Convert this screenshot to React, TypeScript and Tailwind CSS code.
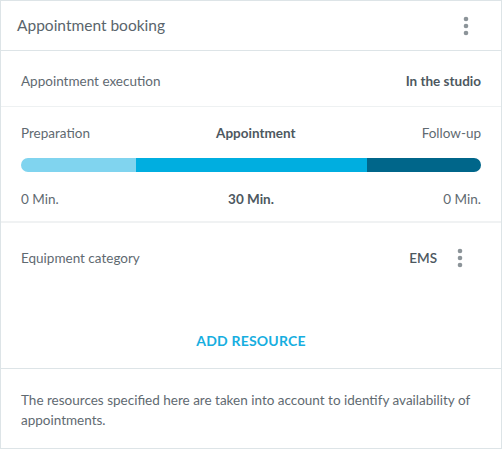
import React from "react";

const DotsIcon = () => (
  <svg width="6" height="20" viewBox="0 0 6 20" className="text-[#8c9499]">
    <circle cx="3" cy="3" r="2.3" fill="currentColor" />
    <circle cx="3" cy="10" r="2.3" fill="currentColor" />
    <circle cx="3" cy="17" r="2.3" fill="currentColor" />
  </svg>
);

const App = () => {
  return (
    <div className="w-[502px] h-[449px] border border-[#dde4e7] bg-white text-[#5f6a71] font-['Lato','Liberation_Sans',sans-serif] flex flex-col">
      <div className="h-[50px] shrink-0 border-b border-[#dde4e7] flex items-center justify-between pl-4 pr-[32px]">
        <h1 className="text-[15.5px] text-[#5a656c]">Appointment booking</h1>
        <DotsIcon />
      </div>

      <div className="h-[56px] shrink-0 border-b border-[#eef1f2] flex items-center justify-between px-5 pt-[5px] text-[13.5px]">
        <span>Appointment execution</span>
        <span className="font-bold text-[#4d585f]">In the studio</span>
      </div>

      <div className="h-[116px] shrink-0 border-b-2 border-[#f0f2f3] px-5 pt-[16px] text-[13.5px]">
        <div className="flex justify-between">
          <span>Preparation</span>
          <span className="font-bold text-[#4d585f]">Appointment</span>
          <span>Follow-up</span>
        </div>
        <div className="mt-[15px] h-[14px] rounded-full overflow-hidden flex">
          <div className="w-[115px] bg-[#80d4ef]" />
          <div className="w-[231px] bg-[#00aee0]" />
          <div className="flex-1 bg-[#00668a]" />
        </div>
        <div className="mt-[17px] flex justify-between">
          <span>0 Min.</span>
          <span className="font-bold text-[#4d585f]">30 Min.</span>
          <span>0 Min.</span>
        </div>
      </div>

      <div className="h-[146px] shrink-0 border-b border-[#dde4e7] flex flex-col">
        <div className="h-[70px] flex items-center justify-between pl-5 pr-[38px] text-[13.5px]">
          <span>Equipment category</span>
          <div className="flex items-center gap-[20px]">
            <span className="font-semibold text-[#4d585f]">EMS</span>
            <DotsIcon />
          </div>
        </div>
        <div className="flex-1 flex items-center justify-center pt-[20px]">
          <button className="text-[14px] font-bold text-[#16aee0] tracking-[0.2px]">ADD RESOURCE</button>
        </div>
      </div>

      <p className="px-5 pt-[21px] text-[13.5px] leading-[20px]">
        The resources specified here are taken into account to identify availability of appointments.
      </p>
    </div>
  );
};

export default App;
